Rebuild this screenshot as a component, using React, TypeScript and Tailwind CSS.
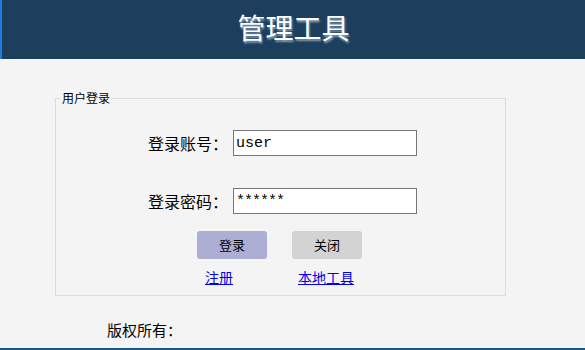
import React, { useState } from 'react';

function App() {
  const [account, setAccount] = useState('user');
  const [password, setPassword] = useState('******');

  return (
    <div className="flex h-[350px] w-full flex-col bg-[#f4f4f4] font-['Noto_Sans_CJK_SC',sans-serif] text-black">
      <div className="flex h-[59px] items-center justify-center border-l-2 border-[#1c7fe0] bg-[#1c3f5e]">
        <h1 className="font-['Liberation_Serif','Noto_Sans_CJK_SC',serif] text-[28px] leading-none font-normal text-white [text-shadow:1px_2px_2px_#8aa0b4]">
          管理工具
        </h1>
      </div>

      <fieldset className="mt-[31px] ml-[55px] h-[206px] w-[451px] border border-[#dcdcdc]">
        <legend className="ml-[4px] px-[2px] text-[12px] leading-[16px]">用户登录</legend>

        <div className="flex flex-col pt-[24px]">
          <div className="flex items-center">
            <label className="w-[172px] text-right text-[16px] leading-[26px]">登录账号：</label>
            <input
              className="ml-[5px] h-[26px] w-[184px] border border-[#767676] bg-white px-[2px] font-['Liberation_Mono',monospace] text-[15px] outline-none"
              value={account}
              onChange={(e) => setAccount(e.target.value)}
            />
          </div>
          <div className="mt-[32px] flex items-center">
            <label className="w-[172px] text-right text-[16px] leading-[26px]">登录密码：</label>
            <input
              className="ml-[5px] h-[26px] w-[184px] border border-[#767676] bg-white px-[2px] font-['Liberation_Mono',monospace] text-[15px] tracking-[-1px] outline-none"
              value={password}
              onChange={(e) => setPassword(e.target.value)}
            />
          </div>

          <div className="mt-[17px] flex pl-[141px]">
            <button
              type="button"
              className="h-[28px] w-[70px] rounded-[3px] bg-[#aeaed4] text-[13px] text-black"
            >
              登录
            </button>
            <button
              type="button"
              className="ml-[25px] h-[28px] w-[70px] rounded-[3px] bg-[#d3d3d3] text-[13px] text-black"
            >
              关闭
            </button>
          </div>

          <div className="mt-[8px] flex pl-[149px] text-[14px] leading-[20px]">
            <a href="#" className="text-[#0000ee] underline">注册</a>
            <a href="#" className="ml-[65px] text-[#0000ee] underline">本地工具</a>
          </div>
        </div>
      </fieldset>

      <div className="mt-[24px] pl-[107px] text-[15px] leading-[20px]">版权所有：</div>
      <div className="mt-auto h-[2px] bg-[#0f5a96]" />
    </div>
  );
}

export default App;
